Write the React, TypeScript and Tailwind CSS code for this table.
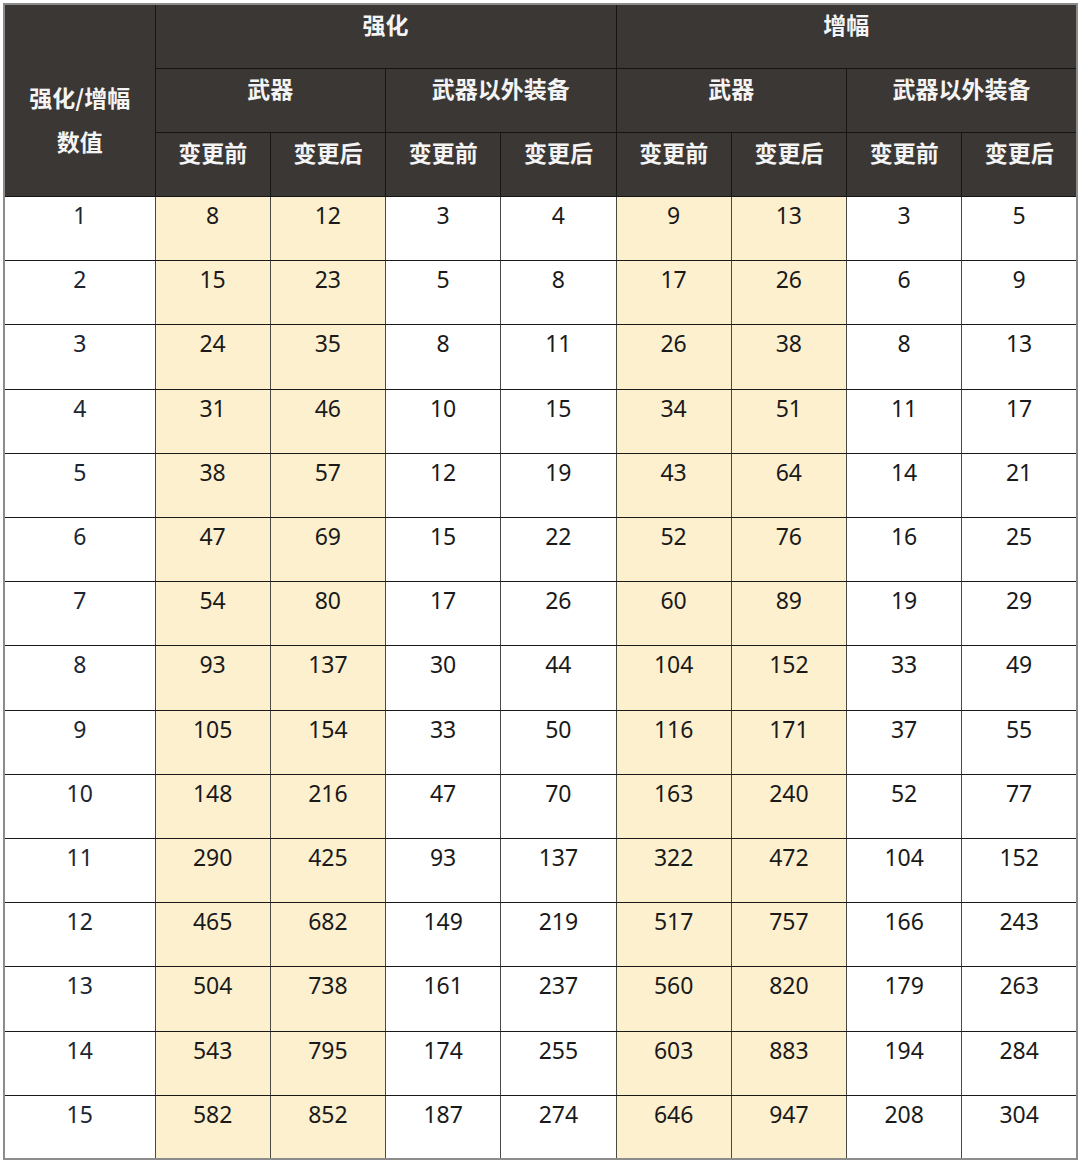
import React from "react";

const rows: number[][] = [
  [1, 8, 12, 3, 4, 9, 13, 3, 5],
  [2, 15, 23, 5, 8, 17, 26, 6, 9],
  [3, 24, 35, 8, 11, 26, 38, 8, 13],
  [4, 31, 46, 10, 15, 34, 51, 11, 17],
  [5, 38, 57, 12, 19, 43, 64, 14, 21],
  [6, 47, 69, 15, 22, 52, 76, 16, 25],
  [7, 54, 80, 17, 26, 60, 89, 19, 29],
  [8, 93, 137, 30, 44, 104, 152, 33, 49],
  [9, 105, 154, 33, 50, 116, 171, 37, 55],
  [10, 148, 216, 47, 70, 163, 240, 52, 77],
  [11, 290, 425, 93, 137, 322, 472, 104, 152],
  [12, 465, 682, 149, 219, 517, 757, 166, 243],
  [13, 504, 738, 161, 237, 560, 820, 179, 263],
  [14, 543, 795, 174, 255, 603, 883, 194, 284],
  [15, 582, 852, 187, 274, 646, 947, 208, 304],
];

const hd =
  "bg-[#3a3734] text-[#f4f4f4] font-bold font-['Noto_Sans_CJK_SC',sans-serif] text-[23px] leading-[28px] pt-[5px] align-top text-center border border-[#151515] h-[64.2px]";

export default function App() {
  return (
    <div className="w-[1080px] h-[1163px] bg-white pt-[3px] pl-[3px]">
      <table className="border-collapse table-fixed w-[1073px] border-2 border-[#8c8c8c] font-['Noto_Sans','Noto_Sans_CJK_SC',sans-serif]">
        <colgroup>
          <col className="w-[151px]" />
          <col className="w-[115.25px]" />
          <col className="w-[115.25px]" />
          <col className="w-[115.25px]" />
          <col className="w-[115.25px]" />
          <col className="w-[115.25px]" />
          <col className="w-[115.25px]" />
          <col className="w-[115.25px]" />
          <col className="w-[115.25px]" />
        </colgroup>
        <thead>
          <tr>
            <th
              rowSpan={3}
              className="bg-[#3a3734] text-[#f4f4f4] font-bold font-['Noto_Sans_CJK_SC',sans-serif] text-[23px] leading-[44px] pt-[70px] align-top text-center border border-[#151515]"
            >
              强化/增幅
              <br />
              数值
            </th>
            <th colSpan={4} className={hd}>
              强化
            </th>
            <th colSpan={4} className={hd}>
              增幅
            </th>
          </tr>
          <tr>
            {["武器", "武器以外装备", "武器", "武器以外装备"].map((t, i) => (
              <th key={i} colSpan={2} className={hd}>
                {t}
              </th>
            ))}
          </tr>
          <tr>
            {Array.from({ length: 8 }).map((_, i) => (
              <th key={i} className={hd}>
                {i % 2 === 0 ? "变更前" : "变更后"}
              </th>
            ))}
          </tr>
        </thead>
        <tbody>
          {rows.map((r, ri) => (
            <tr key={ri}>
              {r.map((v, ci) => {
                const yellow = ci === 1 || ci === 2 || ci === 5 || ci === 6;
                return (
                  <td
                    key={ci}
                    className={
                      "h-[64.2px] align-top text-center pt-[4px] text-[23px] leading-[28px] border-y border-y-[#1a1a1a] border-x border-x-[#4a4a44] " +
                      (yellow ? "bg-[#fdf0cf] " : "bg-white ") +
                      (ci === 0 ? "text-[#1c2633]" : "text-[#1a1a1a]")
                    }
                  >
                    {v}
                  </td>
                );
              })}
            </tr>
          ))}
        </tbody>
      </table>
    </div>
  );
}
